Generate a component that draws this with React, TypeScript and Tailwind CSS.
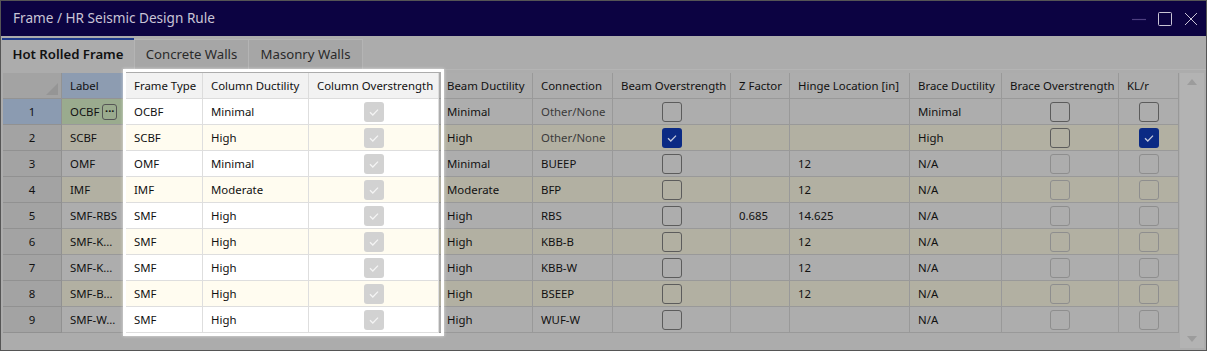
import React from 'react';

type Cell = string | { box: 'on' | 'off' | 'offDis' | 'ghost' };

interface Col {
  title: string;
  w: number;
  lit?: boolean;
}

const cols: Col[] = [
  { title: 'Label', w: 64 },
  { title: 'Frame Type', w: 77, lit: true },
  { title: 'Column Ductility', w: 106, lit: true },
  { title: 'Column Overstrength', w: 130, lit: true },
  { title: 'Beam Ductility', w: 94 },
  { title: 'Connection', w: 80 },
  { title: 'Beam Overstrength', w: 118 },
  { title: 'Z Factor', w: 59 },
  { title: 'Hinge Location [in]', w: 120 },
  { title: 'Brace Ductility', w: 92 },
  { title: 'Brace Overstrength', w: 117 },
  { title: 'KL/r', w: 60 },
];

const G: Cell = { box: 'ghost' };
const off: Cell = { box: 'off' };
const on: Cell = { box: 'on' };
const dis: Cell = { box: 'offDis' };

// label, frame, col duct, col over, beam duct, connection, beam over, z, hinge, brace duct, brace over, kl/r
const rows: Cell[][] = [
  ['OCBF', 'OCBF', 'Minimal', G, 'Minimal', 'Other/None', off, '', '', 'Minimal', off, off],
  ['SCBF', 'SCBF', 'High', G, 'High', 'Other/None', on, '', '', 'High', off, on],
  ['OMF', 'OMF', 'Minimal', G, 'Minimal', 'BUEEP', off, '', '12', 'N/A', dis, dis],
  ['IMF', 'IMF', 'Moderate', G, 'Moderate', 'BFP', off, '', '12', 'N/A', dis, dis],
  ['SMF-RBS', 'SMF', 'High', G, 'High', 'RBS', off, '0.685', '14.625', 'N/A', dis, dis],
  ['SMF-K...', 'SMF', 'High', G, 'High', 'KBB-B', off, '', '12', 'N/A', dis, dis],
  ['SMF-K...', 'SMF', 'High', G, 'High', 'KBB-W', off, '', '12', 'N/A', dis, dis],
  ['SMF-B...', 'SMF', 'High', G, 'High', 'BSEEP', off, '', '12', 'N/A', dis, dis],
  ['SMF-W...', 'SMF', 'High', G, 'High', 'WUF-W', off, '', '', 'N/A', dis, dis],
];

function Check({ kind }: { kind: 'on' | 'off' | 'offDis' | 'ghost' }) {
  if (kind === 'ghost') {
    return (
      <div className="w-5 h-5 rounded-[3px] bg-[#d2d2d2] flex items-center justify-center">
        <svg width="14" height="14" viewBox="0 0 14 14">
          <path d="M3 7.2 L5.8 10 L11 4.6" fill="none" stroke="#f4f4f4" strokeWidth="1.3" />
        </svg>
      </div>
    );
  }
  if (kind === 'on') {
    return (
      <div className="w-5 h-5 rounded-[3px] bg-[#0b2a84] flex items-center justify-center">
        <svg width="14" height="14" viewBox="0 0 14 14">
          <path d="M3 7.2 L5.8 10 L11 4.6" fill="none" stroke="#c4c9dc" strokeWidth="1.3" />
        </svg>
      </div>
    );
  }
  return (
    <div
      className={`w-5 h-5 rounded-[3px] border ${
        kind === 'off' ? 'border-[#5c5c5c]' : 'border-[#8e8e8e]'
      }`}
    />
  );
}

export default function App() {
  return (
    <div
      className="relative w-[1207px] h-[351px] bg-[#acacac] border border-[#555] flex flex-col overflow-hidden"
      style={{ fontFamily: '"Noto Sans", "Open Sans", sans-serif' }}
    >
      {/* Title bar */}
      <div className="h-[35px] bg-[#0c0342] flex items-center justify-between pl-3 pr-[5px] shrink-0">
        <span className="text-[13.6px] text-[#c9c5d6]">Frame / HR Seismic Design Rule</span>
        <div className="flex items-center gap-[6px]">
          <svg width="20" height="20" viewBox="0 0 20 20">
            <path d="M3 10.5 H17" stroke="#4e3f80" strokeWidth="1.2" />
          </svg>
          <svg width="20" height="20" viewBox="0 0 20 20">
            <rect x="3.5" y="3.5" width="13" height="13" rx="1" fill="none" stroke="#c9c5d6" strokeWidth="1" />
          </svg>
          <svg width="20" height="20" viewBox="0 0 20 20">
            <path d="M4 4 L16 16 M16 4 L4 16" stroke="#c9c5d6" strokeWidth="1" />
          </svg>
        </div>
      </div>

      {/* Tabs */}
      <div className="h-[34px] flex items-end pl-px shrink-0">
        <div className="h-[32px] w-[132px] border-t-2 border-[#1e3a8c] bg-[#acacac] flex items-center justify-center text-[13.2px] font-semibold text-[#111]">
          Hot Rolled Frame
        </div>
        <div className="h-[31px] w-[115px] bg-[#a6a6a6] border-x border-t border-[#b4b4b4] flex items-center justify-center text-[13.2px] text-[#2a2a2a]">
          Concrete Walls
        </div>
        <div className="h-[31px] w-[114px] bg-[#a6a6a6] border-r border-t border-[#b4b4b4] flex items-center justify-center text-[13.2px] text-[#2a2a2a]">
          Masonry Walls
        </div>
        <div className="flex-1 h-[31px] border-b border-[#b4b4b4]" />
      </div>

      {/* Grid */}
      <div className="flex pl-[2px] pt-[3px]">
        <div className="flex flex-col text-[11.4px] text-[#111]">
          {/* header */}
          <div className="flex h-[26px]">
            <div className="w-[59px] bg-[#a3a3a3] border-r border-b border-[#939393] relative">
              <svg className="absolute right-[3px] bottom-[3px]" width="12" height="12" viewBox="0 0 12 12">
                <path d="M12 0 L12 12 L0 12 Z" fill="#959595" />
              </svg>
            </div>
            {cols.map((c, i) => (
              <div
                key={i}
                style={{ width: c.w }}
                className={`flex items-center px-2 border-r border-b whitespace-nowrap overflow-hidden ${
                  c.lit
                    ? 'bg-[#f2f2f2] border-[#dcdcdc]'
                    : i === 0
                    ? 'bg-[#8d9cb1] border-[#939393]'
                    : 'bg-[#adadad] border-[#999]'
                }`}
              >
                {c.title}
              </div>
            ))}
          </div>
          {rows.map((r, ri) => {
            const even = ri % 2 === 1;
            return (
              <div key={ri} className="flex h-[26px]">
                <div
                  className={`w-[59px] flex items-center justify-center border-r border-b border-[#919191] ${
                    ri === 0 ? 'bg-[#8b9bb1]' : 'bg-[#a3a3a3]'
                  }`}
                >
                  {ri + 1}
                </div>
                {r.map((cell, ci) => {
                  const c = cols[ci];
                  let bg: string;
                  if (c.lit) bg = even ? 'bg-[#fffcf0] border-[#dedede]' : 'bg-white border-[#dedede]';
                  else if (ci === 0 && ri === 0) bg = 'bg-[#9aab8e] border-[#999]';
                  else bg = even ? 'bg-[#b2b0a2] border-[#999]' : 'bg-[#adadad] border-[#999]';
                  const isBox = typeof cell !== 'string';
                  return (
                    <div
                      key={ci}
                      style={{ width: c.w }}
                      className={`flex items-center border-r border-b whitespace-nowrap overflow-hidden ${bg} ${
                        isBox ? 'justify-center' : 'px-2'
                      } ${ci === 5 && ri < 2 ? 'text-[#3a3a3a]' : ''}`}
                    >
                      {isBox ? (
                        <Check kind={(cell as { box: 'on' | 'off' | 'offDis' | 'ghost' }).box} />
                      ) : ci === 0 && ri === 0 ? (
                        <>
                          <span>{cell as string}</span>
                          <span className="ml-[3px] w-4 h-4 rounded-[3px] border border-[#555] flex items-center justify-center text-[11px] leading-none pb-[3px] font-bold">
                            ···
                          </span>
                        </>
                      ) : (
                        cell as string
                      )}
                    </div>
                  );
                })}
              </div>
            );
          })}
        </div>

        {/* scrollbar */}
        <div className="w-[24px] h-[275px] bg-[#b3b3b3] flex flex-col items-center justify-between py-[6px] ml-px">
          <svg width="10" height="6" viewBox="0 0 10 6">
            <path d="M5 0 L10 6 L0 6 Z" fill="#9c9c9c" />
          </svg>
          <svg width="10" height="6" viewBox="0 0 10 6">
            <path d="M0 0 L10 0 L5 6 Z" fill="#9c9c9c" />
          </svg>
        </div>
      </div>

      {/* spotlight frame */}
      <div className="absolute left-[122px] top-[68px] w-[321px] h-[267px] border-[3px] border-white shadow-[0_0_3px_rgba(255,255,255,0.6)] pointer-events-none" />
    </div>
  );
}
